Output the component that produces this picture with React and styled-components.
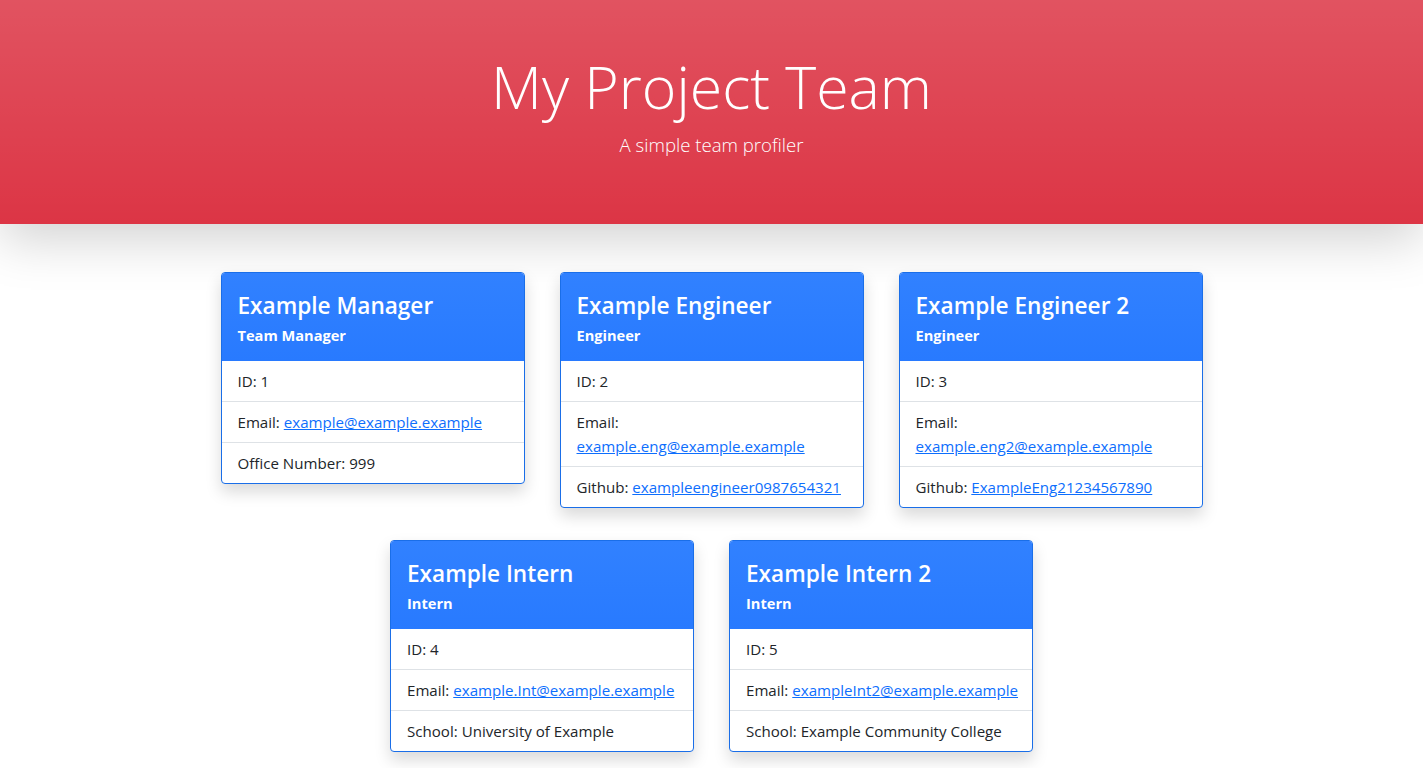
import React from "react";
import styled, { createGlobalStyle } from "styled-components";

const GlobalStyle = createGlobalStyle`
  html, body { margin: 0; padding: 0; background: #fff; }
  body {
    font-family: "Open Sans", "Noto Sans", "Liberation Sans", sans-serif;
    font-size: 15.1px;
    line-height: 24px;
    color: #212529;
  }
  * { box-sizing: border-box; }
`;

const Hero = styled.header`
  height: 224px;
  background-color: #dc3545;
  background-image: linear-gradient(180deg, rgba(255,255,255,0.15), rgba(255,255,255,0));
  box-shadow: 0 1rem 3rem rgba(0,0,0,0.175);
  color: #fff;
  display: flex;
  flex-direction: column;
  align-items: center;
  padding-top: 48px;
`;

const HeroTitle = styled.h1`
  margin: 0 0 6px;
  font-size: 59px;
  font-weight: 300;
  line-height: 76px;
`;

const Lead = styled.p`
  margin: 0;
  font-size: 18.6px;
  font-weight: 300;
  line-height: 30px;
`;

const Main = styled.main`
  padding: 48px 0 16px;
  display: flex;
  flex-wrap: wrap;
  justify-content: center;
  align-items: flex-start;
  column-gap: 35px;
  row-gap: 32px;
  max-width: 1020px;
  margin: 0 auto;
`;

const Card = styled.section`
  width: 304px;
  border: 1px solid #1a6ee8;
  border-radius: 4px;
  overflow: hidden;
  background: #fff;
  box-shadow: 0 0.5rem 1rem rgba(0,0,0,0.15);
`;

const CardHead = styled.div`
  background: linear-gradient(180deg, #3181ff, #287aff);
  color: #fff;
  padding: 19px 16px 16px;
`;

const Name = styled.h3`
  margin: 0 0 5px;
  font-size: 22.6px;
  font-weight: 600;
  line-height: 28.8px;
`;

const Role = styled.h6`
  margin: 0;
  font-size: 14.6px;
  font-weight: 700;
  line-height: 19.2px;
`;

const List = styled.ul`
  list-style: none;
  margin: 0;
  padding: 0;
`;

const Item = styled.li`
  padding: 8px 16px;
  white-space: nowrap;
  border-top: ${({ $first }) => ($first ? "none" : "1px solid #dee2e6")};
`;

const Link = styled.a`
  color: #0d6efd;
  text-decoration: underline;
  display: ${({ $stack }) => ($stack ? "block" : "inline")};
`;

const team = [
  { name: "Example Manager", role: "Team Manager", id: 1, email: "example@example.example", extra: ["Office Number", "999"] },
  { name: "Example Engineer", role: "Engineer", id: 2, email: "example.eng@example.example", stack: true, extra: ["Github", "exampleengineer0987654321", true] },
  { name: "Example Engineer 2", role: "Engineer", id: 3, email: "example.eng2@example.example", stack: true, extra: ["Github", "ExampleEng21234567890", true] },
  { name: "Example Intern", role: "Intern", id: 4, email: "example.Int@example.example", extra: ["School", "University of Example"] },
  { name: "Example Intern 2", role: "Intern", id: 5, email: "exampleInt2@example.example", extra: ["School", "Example Community College"] },
];

export default function App() {
  return (
    <>
      <GlobalStyle />
      <Hero>
        <HeroTitle>My Project Team</HeroTitle>
        <Lead>A simple team profiler</Lead>
      </Hero>
      <Main>
        {team.map((m) => (
          <Card key={m.id}>
            <CardHead>
              <Name>{m.name}</Name>
              <Role>{m.role}</Role>
            </CardHead>
            <List>
              <Item $first>ID: {m.id}</Item>
              <Item>
                Email: <Link $stack={m.stack} href={`mailto:${m.email}`}>{m.email}</Link>
              </Item>
              <Item>
                {m.extra[0]}:{" "}
                {m.extra[2] ? (
                  <Link href={`https://github.com/${m.extra[1]}`}>{m.extra[1]}</Link>
                ) : (
                  m.extra[1]
                )}
              </Item>
            </List>
          </Card>
        ))}
      </Main>
    </>
  );
}
